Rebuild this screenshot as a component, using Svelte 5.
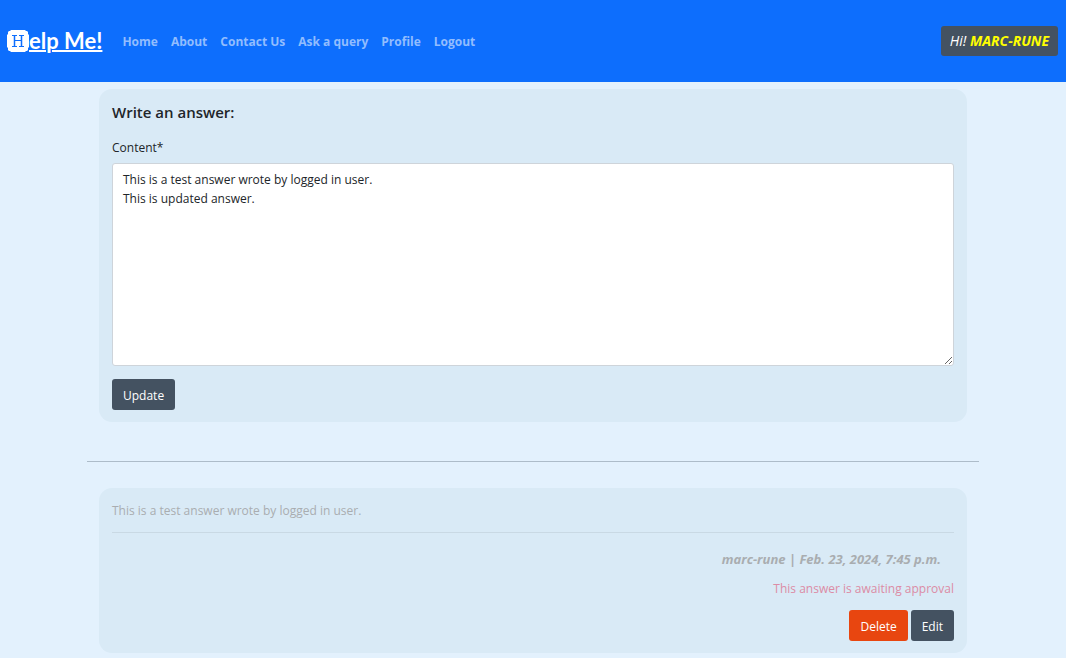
<script>
  const links = ['Home', 'About', 'Contact Us', 'Ask a query', 'Profile', 'Logout'];
  let content = $state('This is a test answer wrote by logged in user.\nThis is updated answer.');
</script>

<header>
  <a class="brand" href="#home" aria-label="Help Me!">
    <svg viewBox="0 0 22 22" aria-hidden="true">
      <path fill="#fff" d="M4 0h14l1 1h1l1 1v2l1 1v12l-1 1v2l-1 1h-1l-1 1H4l-1-1H2l-1-1v-2l-1-1V5l1-1V2l1-1h1z" />
      <path fill="none" stroke="#0d6efd" stroke-width="1.5" d="M7.5 5v12M14.5 5v12" />
      <path fill="none" stroke="#0d6efd" d="M7.5 10.5h7M5 5.5h5M12 5.5h5M5 16.5h5M12 16.5h5" />
    </svg><span>elp Me!</span>
  </a>
  <nav>
    {#each links as link}
      <a href="#{link.toLowerCase().replaceAll(' ', '-')}">{link}</a>
    {/each}
  </nav>
  <p class="greeting">Hi! <strong>MARC-RUNE</strong></p>
</header>

<main>
  <section class="card">
    <h1>Write an answer:</h1>
    <form onsubmit={(event) => event.preventDefault()}>
      <label for="content">Content*</label>
      <textarea id="content" bind:value={content}></textarea>
      <button type="submit">Update</button>
    </form>
  </section>

  <hr />

  <article class="card answer">
    <p class="body">This is a test answer wrote by logged in user.</p>
    <p class="meta">marc-rune | Feb. 23, 2024, 7:45 p.m.</p>
    <p class="pending">This answer is awaiting approval</p>
    <div class="actions">
      <button type="button" class="delete">Delete</button>
      <button type="button">Edit</button>
    </div>
  </article>
</main>

<style>
  :global(body) {
    margin: 0;
    background: #e3f1fd;
    color: #212529;
    font: 12px/19px "Segoe UI", "Open Sans", "Noto Sans", sans-serif;
  }

  header {
    display: flex;
    align-items: center;
    min-height: 82px;
    padding: 0 8px 0 7px;
    box-sizing: border-box;
    background: #0d6efd;
  }

  .brand {
    display: flex;
    align-items: center;
    color: #fff;
    font: 700 22px/28px Lato, sans-serif;
    text-decoration: none;
  }

  .brand svg {
    width: 22px;
    height: 22px;
  }

  .brand span {
    text-decoration: underline;
    text-decoration-thickness: 2px;
  }

  nav {
    display: flex;
    flex-wrap: wrap;
    gap: 13px;
    margin-left: 20px;
  }

  nav a {
    color: #92bdfe;
    font-weight: 700;
    text-decoration: none;
  }

  .greeting {
    margin: 0 0 0 auto;
    padding: 5px 9px;
    border-radius: 3px;
    background: #445261;
    color: #fff;
    font-size: 14px;
    font-style: italic;
    line-height: 20px;
  }

  .greeting strong {
    color: #ff0;
  }

  main {
    max-width: 892px;
    margin: 0 auto;
    padding-top: 7px;
  }

  .card {
    margin: 0 12px;
    padding: 13px 13px 12px;
    border-radius: 13px;
    background: #d9eaf6;
  }

  h1 {
    margin: 0 0 16px;
    font-size: 15px;
    line-height: 20px;
    font-weight: 600;
  }

  form {
    display: flex;
    flex-direction: column;
    align-items: flex-start;
  }

  label {
    margin-bottom: 6px;
  }

  textarea {
    box-sizing: border-box;
    width: 100%;
    height: 203px;
    margin-bottom: 13px;
    padding: 6px 10px;
    border: 1px solid #ced4da;
    border-radius: 3px;
    background: #fff;
    color: inherit;
    font: inherit;
    resize: vertical;
  }

  button {
    padding: 7px 11px 5px;
    border: 0;
    border-radius: 3px;
    background: #445261;
    color: #fff;
    font: inherit;
  }

  hr {
    height: 1px;
    margin: 39px 0 26px;
    border: 0;
    background: #adbcc9;
  }

  .answer p {
    margin: 0;
  }

  .answer .body {
    padding-bottom: 12px;
    border-bottom: 1px solid #c9d9e4;
    color: #a9adb0;
  }

  .answer .meta {
    padding: 17px 13px 10px 0;
    color: #a9adb0;
    font-size: 13px;
    font-style: italic;
    font-weight: 700;
    text-align: right;
  }

  .answer .pending {
    color: #dc8ca5;
    text-align: right;
  }

  .actions {
    display: flex;
    justify-content: flex-end;
    gap: 3px;
    margin-top: 12px;
  }

  .delete {
    background: #e84610;
  }
</style>
